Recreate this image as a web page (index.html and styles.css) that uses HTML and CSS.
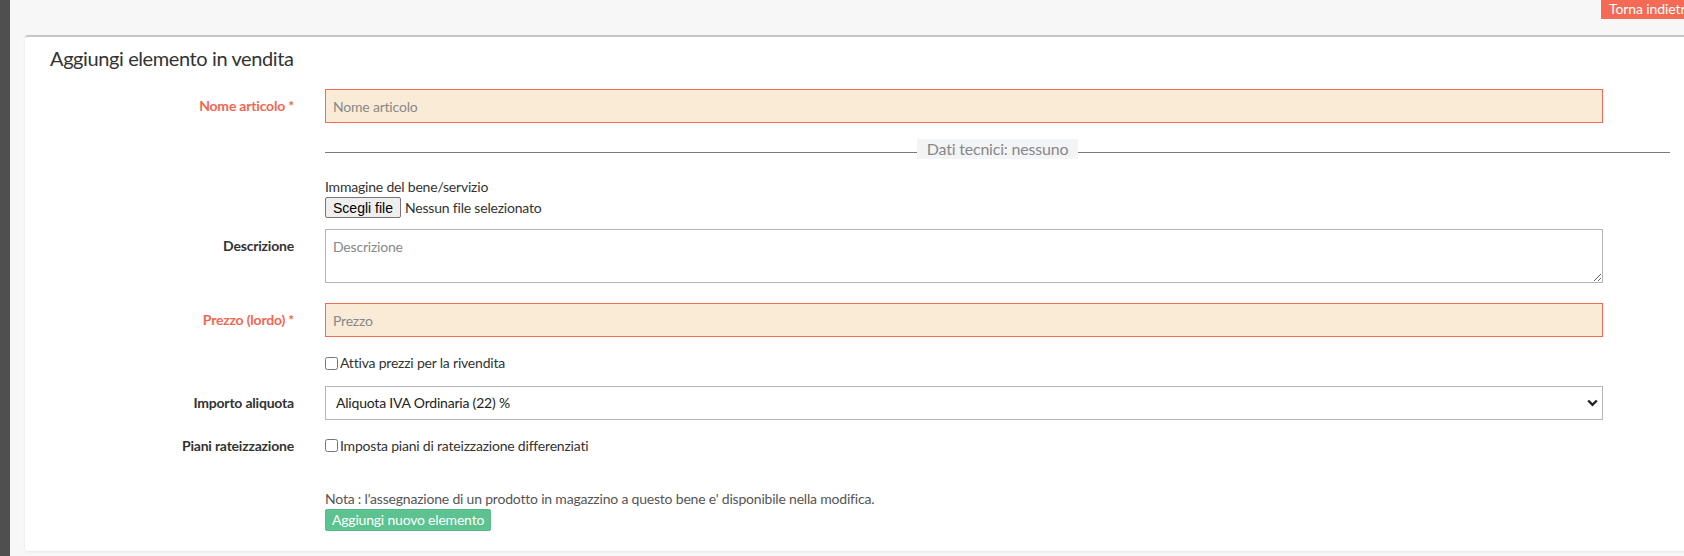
FILE: index.html
```html
<!DOCTYPE html>
<html lang="it">
<head>
<meta charset="utf-8">
<title>Aggiungi elemento in vendita</title>
<link rel="stylesheet" href="styles.css">
</head>
<body>
<div class="sidebar"></div>
<div class="main">
  <div class="topbar">
    <a class="btn-back" href="#">Torna indietro</a>
  </div>
  <div class="card">
    <h2 class="card-title">Aggiungi elemento in vendita</h2>

    <div class="row row-input">
      <label class="label required">Nome articolo *</label>
      <div class="control"><input class="field field-req" type="text" placeholder="Nome articolo"></div>
    </div>

    <div class="divider">
      <span class="divider-text">Dati tecnici: nessuno</span>
    </div>

    <div class="row row-file">
      <div class="label"></div>
      <div class="control">
        <div class="file-caption">Immagine del bene/servizio</div>
        <div class="file-line"><button class="file-btn" type="button">Scegli file</button><span class="file-none">Nessun file selezionato</span></div>
      </div>
    </div>

    <div class="row row-textarea">
      <label class="label label-top">Descrizione</label>
      <div class="control"><textarea class="field area" placeholder="Descrizione"></textarea></div>
    </div>

    <div class="row row-input row-prezzo">
      <label class="label required">Prezzo (lordo) *</label>
      <div class="control"><input class="field field-req" type="text" placeholder="Prezzo"></div>
    </div>

    <div class="row row-check row-attiva">
      <div class="label"></div>
      <div class="control"><label class="check"><input type="checkbox">Attiva prezzi per la rivendita</label></div>
    </div>

    <div class="row row-input row-select">
      <label class="label">Importo aliquota</label>
      <div class="control select-wrap">
        <select class="field select"><option>Aliquota IVA Ordinaria (22) %</option></select>
        <svg class="chev" width="11" height="8" viewBox="0 0 11 8"><path d="M1.2 1.5 L5.5 5.8 L9.8 1.5" fill="none" stroke="#222" stroke-width="2.4"/></svg>
      </div>
    </div>

    <div class="row row-check row-piani">
      <label class="label">Piani rateizzazione</label>
      <div class="control"><label class="check"><input type="checkbox">Imposta piani di rateizzazione differenziati</label></div>
    </div>

    <div class="row row-submit">
      <div class="label"></div>
      <div class="control">
        <div class="note">Nota : l'assegnazione di un prodotto in magazzino a questo bene e' disponibile nella modifica.</div>
        <button class="btn-submit" type="button">Aggiungi nuovo elemento</button>
      </div>
    </div>
  </div>
</div>
</body>
</html>
```

FILE: styles.css
```css
html, body {
  margin: 0;
  padding: 0;
  overflow: hidden;
  height: 556px;
}
body {
  display: flex;
  width: 1720px;
  background: #f7f7f7;
  font-family: "Lato", "Liberation Sans", sans-serif;
  color: #333;
  font-size: 14px;
  letter-spacing: -0.2px;
}
.sidebar {
  width: 10px;
  flex: none;
  background: #4f4f4f;
}
.main {
  flex: 1;
  min-width: 0;
  background: #f7f7f7;
}
.topbar {
  height: 35px;
  display: flex;
  justify-content: flex-end;
  margin-right: 19px;
}
.btn-back {
  display: block;
  height: 19px;
  line-height: 18px;
  padding: 0 8px;
  background: #f46a55;
  color: #fff;
  text-decoration: none;
  font-size: 14px;
  letter-spacing: -0.1px;
  box-sizing: border-box;
}
.card {
  margin: 0 15px;
  background: #fff;
  border-top: 2px solid #c6c6c6;
  border-radius: 3px;
  box-shadow: 0 1px 3px rgba(0, 0, 0, 0.08);
  padding: 7px 25px 20px;
}
.card-title {
  margin: 0;
  font-weight: 400;
  font-size: 20px;
  line-height: 28px;
  color: #333;
  letter-spacing: -0.4px;
}
.row {
  display: flex;
  column-gap: 31px;
}
.label {
  width: 244px;
  flex: none;
  text-align: right;
  font-weight: 700;
  font-size: 14px;
  color: #333;
}
.label.required {
  color: #f26650;
}
.control {
  width: 1278px;
  flex: none;
}
.row-input .label {
  line-height: 34px;
}
.row-input {
  margin-top: 17px;
}
.field {
  display: block;
  width: 100%;
  box-sizing: border-box;
  height: 34px;
  border: 1px solid #b5b5b5;
  padding: 0 7px;
  font-family: inherit;
  font-size: 14px;
  letter-spacing: -0.2px;
  color: #333;
  background: #fff;
  outline: none;
  border-radius: 0;
}
.field::placeholder {
  color: #888;
}
.field-req {
  background: #faebd7;
  border-color: #f46a55;
}
.divider {
  margin-top: 16px;
  margin-left: 275px;
  width: 1345px;
  display: flex;
  align-items: flex-end;
}
.divider::before,
.divider::after {
  content: "";
  flex: 1;
  border-top: 1px solid #7a7a7a;
  margin-bottom: 6px;
}
.divider-text {
  background: #f2f4f6;
  color: #888;
  font-size: 16px;
  line-height: 20px;
  padding: 0 10px;
}
.row-file {
  margin-top: 19px;
}
.file-caption {
  line-height: 18px;
}
.file-line {
  margin-top: 1px;
  display: flex;
  align-items: center;
}
.file-btn {
  height: 21px;
  width: 76px;
  padding: 0;
  font-family: "Liberation Sans", Arial, sans-serif;
  font-size: 14px;
  letter-spacing: 0;
  color: #000;
  background: #efefef;
  border: 1px solid #767676;
  border-radius: 2px;
}
.file-none {
  margin-left: 4px;
}
.row-textarea {
  margin-top: 11px;
}
.label-top {
  padding-top: 8px;
  line-height: 18px;
}
.area {
  height: 54px;
  padding: 8px 7px;
  line-height: 18px;
  resize: vertical;
}
.row-prezzo {
  margin-top: 20px;
}
.row-check {
  line-height: 18px;
}
.row-attiva {
  margin-top: 17px;
}
.check {
  display: inline-flex;
  align-items: center;
}
.check input {
  margin: 0 2px 0 0;
  width: 13px;
  height: 13px;
}
.row-select {
  margin-top: 12px;
}
.select-wrap {
  position: relative;
}
.select {
  appearance: none;
  -webkit-appearance: none;
  padding: 0 10px;
  color: #222;
}
.chev {
  position: absolute;
  right: 5px;
  top: 13px;
}
.row-piani {
  margin-top: 17px;
}
.row-submit {
  margin-top: 34px;
}
.note {
  color: #555;
  line-height: 18px;
}
.btn-submit {
  margin-top: 1px;
  height: 22px;
  padding: 0 6px;
  background: #5cc28f;
  color: #fff;
  border: 1px solid #55b985;
  border-radius: 2px;
  font-family: inherit;
  font-size: 14px;
  letter-spacing: -0.2px;
  line-height: 20px;
}
```
